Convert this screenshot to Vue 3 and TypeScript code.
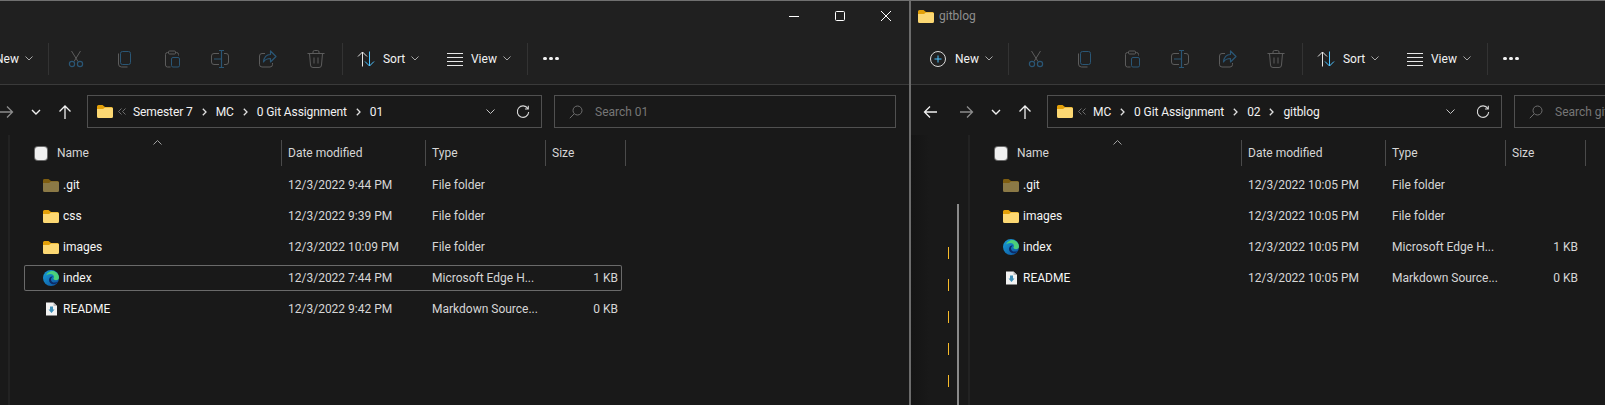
<template>
  <div class="desktop">
    <section v-for="win in windows" :key="win.id" class="window" :class="win.id">
      <header class="titlebar">
        <div v-if="win.title" class="title">
          <svg class="folder" width="16" height="13" viewBox="0 0 16 13">
            <path d="M0 1.500A1.500 1.500 0 0 1 1.500 0h4L8 2h6.500A1.500 1.500 0 0 1 16 3.500V6H0z" fill="#e3a008" />
            <path d="M0 4h6l2-1.500h6.500A1.500 1.500 0 0 1 16 4v7.500a1.500 1.500 0 0 1-1.500 1.500h-13A1.500 1.500 0 0 1 0 11.500z" fill="#fcd873" />
          </svg>
          <span>{{ win.title }}</span>
        </div>
        <div v-else class="window-controls">
          <svg width="46" height="30" viewBox="0 0 46 30"><path d="M18 15.500h10" stroke="#fff" fill="none" /></svg>
          <svg width="46" height="30" viewBox="0 0 46 30"><rect x="18.500" y="10.500" width="9" height="9" rx="1" stroke="#fff" fill="none" /></svg>
          <svg width="46" height="30" viewBox="0 0 46 30"><path d="M18 10l10 10M28 10L18 20" stroke="#fff" fill="none" /></svg>
        </div>
      </header>

      <div class="toolbar">
        <button class="tool new">
          <svg width="18" height="18" viewBox="0 0 18 18" fill="none">
            <circle cx="9" cy="9" r="7.500" stroke="#d8d8d8" />
            <path d="M9 5.500v7M5.500 9h7" stroke="#4cc2ff" />
          </svg>
          <span>New</span>
          <svg class="chev" width="8" height="5" viewBox="0 0 8 5"><path d="M.5.500L4 4 7.500.500" stroke="#a8a8a8" fill="none" /></svg>
        </button>
        <i class="sep first"></i>

        <span class="action">
          <svg width="18" height="18" viewBox="0 0 18 18" fill="none">
            <path d="M4.500 1l6.500 10.500M13.500 1L7 11.500" stroke="#5c5c5c" />
            <circle cx="5" cy="14" r="2.600" stroke="#2a5675" stroke-width="1.200" />
            <circle cx="13" cy="14" r="2.600" stroke="#2a5675" stroke-width="1.200" />
          </svg>
        </span>
        <span class="action">
          <svg width="18" height="18" viewBox="0 0 18 18" fill="none">
            <rect x="5.500" y="1.500" width="10" height="13" rx="2" stroke="#2a5675" />
            <path d="M3.500 3.500v10.500a3 3 0 0 0 3 3h6" stroke="#5c5c5c" />
          </svg>
        </span>
        <span class="action">
          <svg width="18" height="18" viewBox="0 0 18 18" fill="none">
            <path d="M5.500 2.500h-1a2 2 0 0 0-2 2v10.500a2 2 0 0 0 2 2h3M12.500 2.500h1a2 2 0 0 1 2 2v1" stroke="#5c5c5c" />
            <rect x="5.500" y="1" width="7" height="3" rx="1" stroke="#5c5c5c" />
            <rect x="8.500" y="7.500" width="8" height="9.500" rx="1.500" stroke="#2a5675" />
          </svg>
        </span>
        <span class="action">
          <svg width="18" height="18" viewBox="0 0 18 18" fill="none">
            <path d="M8 3.500H3A2.500 2.500 0 0 0 .5 6v6A2.500 2.500 0 0 0 3 14.500h5M13 3.500h2A2.500 2.500 0 0 1 17.500 6v6a2.500 2.500 0 0 1-2.500 2.500h-2" stroke="#5c5c5c" />
            <path d="M8 .500h5M8 17.500h5M10.500.500v17M3 9h7.500" stroke="#2a5675" stroke-width="1.200" />
          </svg>
        </span>
        <span class="action">
          <svg width="18" height="18" viewBox="0 0 18 18" fill="none">
            <path d="M6 3.500H3A2.500 2.500 0 0 0 .5 6v8.500A2.500 2.500 0 0 0 3 17h8a2.500 2.500 0 0 0 2.500-2.500V13" stroke="#5c5c5c" />
            <path d="M11.500 1v3.500C7 4.500 5 7.500 4.500 12c1.500-2.500 3.500-3.500 7-3.500V12L17 6.500z" stroke="#2a5675" stroke-width="1.200" stroke-linejoin="round" />
          </svg>
        </span>
        <span class="action">
          <svg width="18" height="18" viewBox="0 0 18 18" fill="none">
            <path d="M.5 3.500h17M6 3.500V2a1.500 1.500 0 0 1 1.500-1.500h3A1.500 1.500 0 0 1 12 2v1.500M2.500 3.500l1 11.500a2.500 2.500 0 0 0 2.500 2.500h6a2.500 2.500 0 0 0 2.500-2.500l1-11.500M7 7.500v6M11 7.500v6" stroke="#5c5c5c" />
          </svg>
        </span>
        <i class="sep second"></i>

        <button class="tool sort">
          <svg width="18" height="18" viewBox="0 0 18 18" fill="none">
            <path d="M5.500 16.500V2M1 6.500l4.500-4.500L10 6.500" stroke="#e6e6e6" />
            <path d="M12.500 1.500V16M8 11.500l4.500 4.500 4.500-4.500" stroke="#4cc2ff" />
          </svg>
          <span class="label">Sort</span>
          <svg class="chev" width="8" height="5" viewBox="0 0 8 5"><path d="M.5.500L4 4 7.500.500" stroke="#a8a8a8" fill="none" /></svg>
        </button>
        <button class="tool view">
          <svg width="18" height="18" viewBox="0 0 18 18" fill="none">
            <path d="M1 3.500h16M1 7.500h16M1 11.500h16M1 15.500h16" stroke="#e6e6e6" />
          </svg>
          <span class="label">View</span>
          <svg class="chev" width="8" height="5" viewBox="0 0 8 5"><path d="M.5.500L4 4 7.500.500" stroke="#a8a8a8" fill="none" /></svg>
        </button>
        <i class="sep third"></i>
        <div class="more"><b></b><b></b><b></b></div>
      </div>

      <div class="addressbar">
        <div class="nav-buttons">
          <svg width="16" height="16" viewBox="0 0 16 16" fill="none"><path d="M14 8H2M7 2.500L1.500 8 7 13.500" stroke="#f0f0f0" stroke-width="1.300" /></svg>
          <svg width="16" height="16" viewBox="0 0 16 16" fill="none"><path d="M2 8h12M9 2.500L14.500 8 9 13.500" stroke="#8c8c8c" stroke-width="1.300" /></svg>
          <svg width="10" height="16" viewBox="0 0 10 16" fill="none"><path d="M1 6l4 4 4-4" stroke="#f0f0f0" stroke-width="1.400" /></svg>
          <svg width="14" height="16" viewBox="0 0 14 16" fill="none"><path d="M7 15V2M1.500 7.500L7 2l5.500 5.500" stroke="#f0f0f0" stroke-width="1.300" /></svg>
        </div>
        <div class="address">
          <svg class="folder" width="16" height="13" viewBox="0 0 16 13">
            <path d="M0 1.500A1.500 1.500 0 0 1 1.500 0h4L8 2h6.500A1.500 1.500 0 0 1 16 3.500V6H0z" fill="#e3a008" />
            <path d="M0 4h6l2-1.500h6.500A1.500 1.500 0 0 1 16 4v7.500a1.500 1.500 0 0 1-1.500 1.500h-13A1.500 1.500 0 0 1 0 11.500z" fill="#fcd873" />
          </svg>
          <svg class="overflow" width="8" height="7" viewBox="0 0 8 7" fill="none"><path d="M3.500.500L.5 3.500l3 3M7.500.500l-3 3 3 3" stroke="#6e6e6e" /></svg>
          <template v-for="(crumb, i) in win.crumbs" :key="crumb">
            <span class="crumb">{{ crumb }}</span>
            <svg v-if="i < win.crumbs.length - 1" class="crumb-sep" width="5" height="8" viewBox="0 0 5 8" fill="none"><path d="M.8.800L4 4 .8 7.200" stroke="#e0e0e0" stroke-width="1.300" /></svg>
          </template>
          <svg class="history" width="9" height="6" viewBox="0 0 9 6" fill="none"><path d="M.5.500l4 4 4-4" stroke="#c4c4c4" /></svg>
          <svg class="refresh" width="14" height="14" viewBox="0 0 14 14" fill="none"><path d="M11.800 3.500A5.700 5.700 0 1 0 12.700 7M12.300.8v3.200H9" stroke="#d8d8d8" stroke-width="1.100" /></svg>
        </div>
        <div class="search">
          <svg width="14" height="14" viewBox="0 0 14 14" fill="none"><circle cx="8.500" cy="5.500" r="4.500" stroke="#6e6e6e" /><path d="M5.200 8.800L.8 13.200" stroke="#6e6e6e" /></svg>
          <span>{{ win.search }}</span>
        </div>
      </div>

      <div class="main">
        <aside class="navpane">
          <div class="ticks"><i v-for="n in win.ticks" :key="n"></i></div>
          <div v-if="win.ticks" class="thumb"></div>
        </aside>
        <div class="list">
          <div class="list-head">
            <div class="head-cell name"><span class="checkbox"></span>Name</div>
            <div class="head-cell">Date modified</div>
            <div class="head-cell">Type</div>
            <div class="head-cell">Size</div>
            <svg class="caret" width="9" height="5" viewBox="0 0 9 5" fill="none"><path d="M.5 4.500l4-4 4 4" stroke="#a0a0a0" /></svg>
          </div>
          <div v-for="file in win.files" :key="file.name" class="row" :class="{ focused: file.focused }">
            <div class="cell name">
              <span class="file-icon">
                <svg v-if="file.kind === 'folder'" :class="{ hidden: file.hidden }" width="16" height="13" viewBox="0 0 16 13">
                  <path d="M0 1.500A1.500 1.500 0 0 1 1.500 0h4L8 2h6.500A1.500 1.500 0 0 1 16 3.500V6H0z" fill="#e3a008" />
                  <path d="M0 4h6l2-1.500h6.500A1.500 1.500 0 0 1 16 4v7.500a1.500 1.500 0 0 1-1.500 1.500h-13A1.500 1.500 0 0 1 0 11.500z" fill="#fcd873" />
                </svg>
                <svg v-else-if="file.kind === 'edge'" width="16" height="16" viewBox="0 0 16 16">
                  <defs>
                    <linearGradient :id="win.id + 'edge'" x1="0" y1="0" x2="1" y2="1">
                      <stop offset="0" stop-color="#19a0d8" />
                      <stop offset="1" stop-color="#0c4f9c" />
                    </linearGradient>
                  </defs>
                  <circle cx="8" cy="8" r="8" :fill="`url(#${win.id}edge)`" />
                  <path d="M3 5.500C4.500 2 8 .5 11 1.200c2.800.8 5 3.400 5 6.300 0 1.700-1.400 2.700-3 2.700-1.300 0-2.600-.5-2.600-1.400 0-.5.6-.9.6-1.800C11 5 9 3.800 7 4 5.300 4.100 4 4.700 3 5.500z" fill="#4bd07a" />
                  <path d="M6 10c0 2.500 2 4.300 4.600 4.300 1.800 0 3.600-.9 5-2.700-1.200.7-2.600 1-4 1C9.500 12.600 8 11.600 8 9.500 8 8 9 7 10 6.500 7.800 6 6 7.800 6 10z" fill="#0d2a66" />
                </svg>
                <svg v-else width="11" height="14" viewBox="0 0 11 14">
                  <path d="M0 .5h7.500L11 4v9.500H0z" fill="#f2f2f2" />
                  <path d="M7.500.5V4H11z" fill="#bdbdbd" />
                  <path d="M4 4.500h3v3h1.500l-3 3.500-3-3.500H4z" fill="#3d8fb8" />
                </svg>
              </span>
              {{ file.name }}
            </div>
            <div class="cell">{{ file.date }}</div>
            <div class="cell">{{ file.type }}</div>
            <div class="cell size">{{ file.size }}</div>
          </div>
        </div>
      </div>
    </section>
  </div>
</template>

<script setup lang="ts">
interface FileRow {
  name: string
  date: string
  type: string
  size: string
  kind: 'folder' | 'edge' | 'markdown'
  hidden?: boolean
  focused?: boolean
}

interface ExplorerWindow {
  id: string
  title: string
  crumbs: string[]
  search: string
  ticks: number
  files: FileRow[]
}

const windows: ExplorerWindow[] = [
  {
    id: 'left',
    title: '',
    crumbs: ['Semester 7', 'MC', '0 Git Assignment', '01'],
    search: 'Search 01',
    ticks: 0,
    files: [
      { name: '.git', date: '12/3/2022 9:44 PM', type: 'File folder', size: '', kind: 'folder', hidden: true },
      { name: 'css', date: '12/3/2022 9:39 PM', type: 'File folder', size: '', kind: 'folder' },
      { name: 'images', date: '12/3/2022 10:09 PM', type: 'File folder', size: '', kind: 'folder' },
      { name: 'index', date: '12/3/2022 7:44 PM', type: 'Microsoft Edge H...', size: '1 KB', kind: 'edge', focused: true },
      { name: 'README', date: '12/3/2022 9:42 PM', type: 'Markdown Source...', size: '0 KB', kind: 'markdown' }
    ]
  },
  {
    id: 'right',
    title: 'gitblog',
    crumbs: ['MC', '0 Git Assignment', '02', 'gitblog'],
    search: 'Search gitblog',
    ticks: 5,
    files: [
      { name: '.git', date: '12/3/2022 10:05 PM', type: 'File folder', size: '', kind: 'folder', hidden: true },
      { name: 'images', date: '12/3/2022 10:05 PM', type: 'File folder', size: '', kind: 'folder' },
      { name: 'index', date: '12/3/2022 10:05 PM', type: 'Microsoft Edge H...', size: '1 KB', kind: 'edge' },
      { name: 'README', date: '12/3/2022 10:05 PM', type: 'Markdown Source...', size: '0 KB', kind: 'markdown' }
    ]
  }
]
</script>

<style>
html,
body {
  background: #191919;
  overflow: hidden;
}
</style>

<style scoped>
.desktop {
  display: flex;
  width: 1605px;
  height: 405px;
  overflow: hidden;
  background: #191919;
  color: #fff;
  font-family: Roboto, "Open Sans", sans-serif;
  font-size: 12px;
}

.window {
  flex: none;
  display: flex;
  flex-direction: column;
  width: 960px;
  height: 405px;
  background: #191919;
  border-top: 1px solid #707070;
  box-sizing: border-box;
}

.window.left {
  margin-left: -51px;
}

.window.right {
  position: relative;
}

.window.right::before {
  content: "";
  position: absolute;
  left: 0;
  top: 0;
  bottom: 0;
  width: 2px;
  background: #6c6c6c;
}

.titlebar {
  flex: none;
  display: flex;
  align-items: center;
  height: 36px;
  background: #202020;
}

.title {
  display: flex;
  align-items: center;
  gap: 4px;
  margin-left: 9px;
  margin-top: -6px;
  color: #8f8f8f;
}

.title .folder {
  margin-right: 1px;
}

.window-controls {
  display: flex;
  margin-left: 822px;
  margin-top: -7px;
}

.toolbar {
  flex: none;
  display: flex;
  align-items: center;
  height: 48px;
  padding-bottom: 4px;
  box-sizing: border-box;
  background: #202020;
  border-bottom: 1px solid #3a3a3a;
}

.tool {
  display: flex;
  align-items: center;
  flex: none;
  padding: 0;
  background: none;
  border: none;
  color: #f2f2f2;
  font: inherit;
}

.tool span {
  margin-left: 8px;
}

.tool .chev {
  margin-left: 6px;
}

.tool.new {
  padding: 0 15px 0 20px;
}

.tool.sort {
  padding: 0 27px 0 14px;
}

.tool.sort .label {
  width: 22px;
}

.tool.view .label {
  width: 26px;
  margin-left: 7px;
}

.sep {
  flex: none;
  width: 1px;
  height: 32px;
  background: #333;
}

.sep.first {
  margin-right: 3px;
}

.sep.second {
  margin-left: 2px;
}

.sep.third {
  margin-left: 16px;
}

.action {
  display: flex;
  justify-content: center;
  flex: none;
  width: 48px;
}

.more {
  display: flex;
  gap: 2px;
  margin-left: 15px;
}

.more b {
  width: 4px;
  height: 3px;
  border-radius: 2px;
  background: #f2f2f2;
}

.addressbar {
  flex: none;
  display: flex;
  align-items: center;
  height: 50px;
  padding-top: 3px;
  box-sizing: border-box;
}

.nav-buttons {
  display: flex;
  align-items: center;
  width: 138px;
  padding-left: 14px;
  box-sizing: border-box;
}

.nav-buttons svg:nth-child(2) {
  margin-left: 19px;
}

.nav-buttons svg:nth-child(3) {
  margin-left: 17px;
}

.nav-buttons svg:nth-child(4) {
  margin-left: 17px;
}

.address {
  display: flex;
  align-items: center;
  flex: none;
  width: 455px;
  height: 33px;
  padding-left: 9px;
  box-sizing: border-box;
  border: 1px solid #505050;
}

.address .overflow {
  margin: 0 7px 0 5px;
}

.crumb {
  color: #f2f2f2;
  letter-spacing: -0.1px;
}

.crumb-sep {
  margin: 0 9px;
}

.history {
  margin-left: auto;
}

.refresh {
  margin: 0 11px 0 21px;
}

.search {
  display: flex;
  align-items: center;
  flex: none;
  width: 342px;
  height: 33px;
  margin-left: 12px;
  padding-left: 14px;
  box-sizing: border-box;
  border: 1px solid #505050;
  color: #767676;
}

.search span {
  margin-left: 12px;
}

.main {
  flex: 1;
  display: flex;
  min-height: 0;
  padding-top: 5px;
  background: #191919;
}

.navpane {
  flex: none;
  display: flex;
  gap: 8px;
  width: 61px;
  margin-top: -5px;
  padding-left: 39px;
  box-sizing: border-box;
  border-right: 2px solid #222;
}

.right .navpane {
  background: linear-gradient(90deg, #141414 2px, #191919 20px);
}

.ticks {
  display: flex;
  flex-direction: column;
  gap: 20px;
  width: 1px;
  padding-top: 112px;
}

.ticks i {
  flex: none;
  height: 12px;
  background: #f7bb2a;
}

.thumb {
  flex: none;
  width: 2px;
  margin-top: 69px;
  background: #8a8a8a;
}

.list {
  flex: none;
  width: 602px;
  margin-left: 14px;
}

.list-head {
  position: relative;
  display: grid;
  grid-template-columns: 258px 144px 120px 80px;
  height: 26px;
  margin-bottom: 6px;
  color: #d6d6d6;
}

.head-cell {
  display: flex;
  align-items: center;
  padding-left: 6px;
  border-right: 1px solid #4a4a4a;
}

.head-cell.name {
  padding-left: 11px;
}

.checkbox {
  flex: none;
  width: 12px;
  height: 13px;
  margin-right: 10px;
  border-radius: 3px;
  background: #f0f0f0;
  box-shadow: 0 0 0 1px #6a6a6a;
}

.caret {
  position: absolute;
  left: 129px;
  top: 0;
}

.row {
  display: grid;
  grid-template-columns: 257px 144px 120px 77px;
  align-items: center;
  width: 598px;
  height: 26px;
  margin-bottom: 5px;
  border-radius: 2px;
  color: #d6d6d6;
  box-sizing: border-box;
}

.row.focused {
  box-shadow: inset 0 0 0 1px #6a6a6a;
}

.cell {
  padding-left: 7px;
  white-space: nowrap;
  overflow: hidden;
}

.cell.name {
  display: flex;
  align-items: center;
  padding-left: 19px;
  color: #f5f5f5;
}

.file-icon {
  display: flex;
  justify-content: center;
  flex: none;
  width: 16px;
  margin-right: 4px;
}

.hidden {
  opacity: 0.5;
}

.cell.size {
  padding: 0 4px 0 0;
  text-align: right;
}
</style>
